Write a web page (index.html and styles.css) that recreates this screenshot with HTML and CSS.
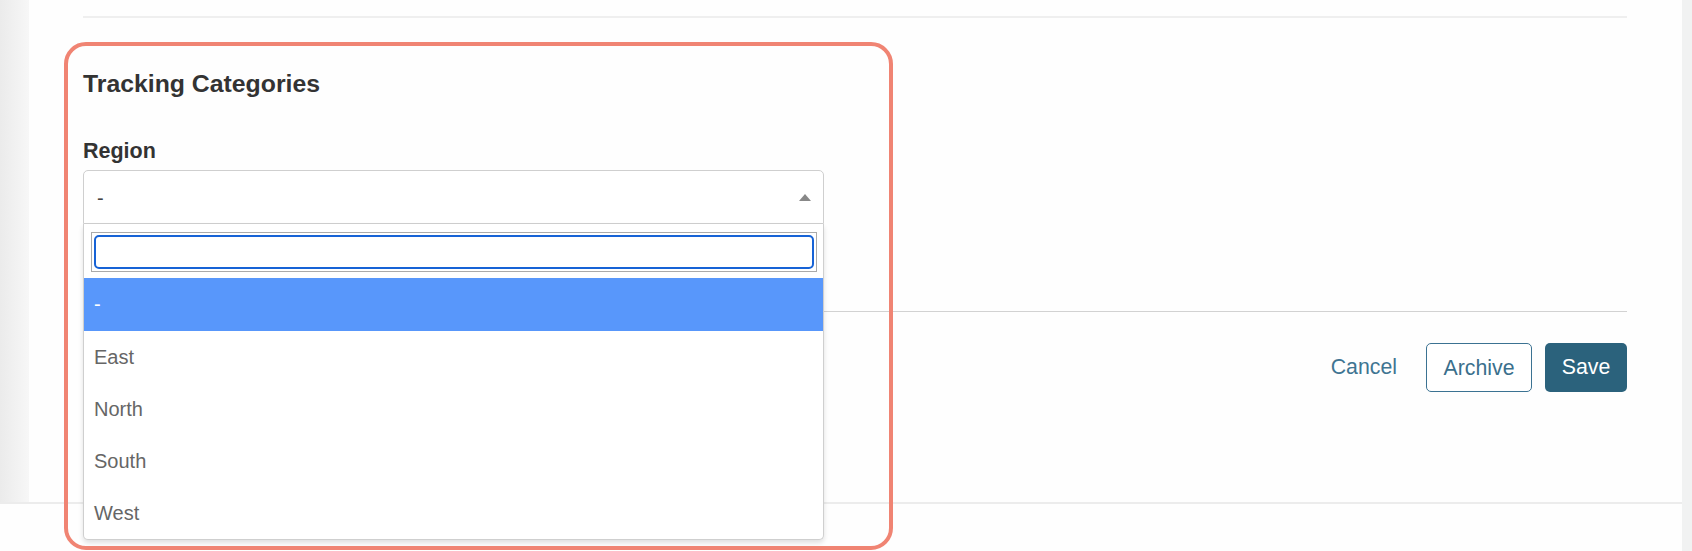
FILE: index.html
```html
<!DOCTYPE html>
<html lang="en">
<head>
<meta charset="utf-8">
<title>Tracking Categories</title>
<link rel="stylesheet" href="styles.css">
</head>
<body>
<div class="page">
  <div class="column">
    <div class="main">
      <aside class="left-shade"></aside>
      <section class="panel">
        <div class="top-rule"></div>
        <div class="section">
          <h2 class="title">Tracking Categories</h2>
          <label class="label">Region</label>
          <div class="select">
            <div class="select-box">
              <span class="select-value">-</span>
              <span class="arrow-up"></span>
            </div>
            <div class="dropdown">
              <div class="search">
                <div class="search-frame">
                  <input class="search-input" type="text" value="">
                </div>
              </div>
              <ul class="options">
                <li class="option active">-</li>
                <li class="option">East</li>
                <li class="option">North</li>
                <li class="option">South</li>
                <li class="option">West</li>
              </ul>
            </div>
          </div>
        </div>
        <div class="actions">
          <button class="btn btn-link">Cancel</button>
          <button class="btn btn-outline">Archive</button>
          <button class="btn btn-primary">Save</button>
        </div>
      </section>
    </div>
    <footer class="footer"></footer>
  </div>
  <div class="right-strip"></div>
  <div class="annotation"></div>
</div>
</body>
</html>
```
FILE: styles.css
```css
* { box-sizing: border-box; }
html, body {
  margin: 0;
  padding: 0;
  width: 1692px;
  height: 551px;
  overflow: hidden;
  font-family: "Liberation Sans", Arial, sans-serif;
  background: #fefefe;
}
.page {
  position: relative;
  display: flex;
  width: 1692px;
  height: 551px;
}
.column {
  width: 1682px;
  display: flex;
  flex-direction: column;
}
.right-strip {
  width: 10px;
  background: #f1f2f2;
}
.main {
  display: flex;
  height: 502px;
}
.left-shade {
  width: 29px;
  background: linear-gradient(to right, #ebebeb 0%, #f2f2f2 60%, #f7f7f7 100%);
}
.panel {
  flex: 1;
  background: #fefefe;
  padding: 0 55px 0 54px;
}
.top-rule {
  margin-top: 16px;
  border-top: 2px solid #efefef;
}
.section {
  padding-bottom: 87px;
  border-bottom: 1px solid #d2d2d2;
}
.title {
  margin: 52px 0 0 0;
  font-size: 24.8px;
  line-height: 28px;
  font-weight: bold;
  color: #333;
}
.label {
  display: block;
  margin-top: 41px;
  font-size: 21.5px;
  line-height: 24px;
  font-weight: bold;
  color: #333;
}
.select {
  position: relative;
  width: 741px;
  margin-top: 7px;
  z-index: 5;
}
.select-box {
  display: flex;
  align-items: center;
  height: 54px;
  padding: 0 12px 2px 13px;
  border: 1px solid #cfcfcf;
  border-radius: 5px 5px 0 0;
  background: #fff;
}
.select-value {
  font-size: 20px;
  color: #444;
  padding-top: 4px;
}
.arrow-up {
  margin-left: auto;
  margin-top: 3px;
  width: 0;
  height: 0;
  border-left: 6px solid transparent;
  border-right: 6px solid transparent;
  border-bottom: 7px solid #888;
}
.dropdown {
  position: absolute;
  top: 100%;
  left: 0;
  right: 0;
  background: #fff;
  border: 1px solid #cfcfcf;
  border-top: none;
  border-radius: 0 0 5px 5px;
  box-shadow: 0 3px 5px rgba(0, 0, 0, 0.12);
}
.search {
  padding: 8px 6px 6px 7px;
}
.search-frame {
  border: 1px solid #aaa;
  padding: 2px;
}
.search-input {
  display: block;
  width: 100%;
  height: 34px;
  margin: 0;
  border: 2px solid #1763d6;
  border-radius: 5px;
  outline: none;
  background: #fff;
  font-family: inherit;
  font-size: 20px;
}
.options {
  list-style: none;
  margin: 0;
  padding: 0;
}
.option {
  height: 52px;
  line-height: 52px;
  padding-left: 10px;
  font-size: 20px;
  color: #666;
}
.option.active {
  height: 53px;
  line-height: 53px;
  background: #5897fb;
  color: #fff;
}
.actions {
  display: flex;
  justify-content: flex-end;
  align-items: center;
  margin-top: 31px;
}
.btn {
  height: 49px;
  font-family: inherit;
  font-size: 21.3px;
  line-height: 49px;
  border-radius: 5px;
  cursor: pointer;
  padding: 0;
}
.btn-link {
  border: none;
  background: transparent;
  color: #3f7592;
  margin-right: 29px;
}
.btn-outline {
  width: 106px;
  border: 1px solid #3b7292;
  background: #fff;
  color: #3a6f8c;
}
.btn-primary {
  width: 82px;
  margin-left: 13px;
  border: none;
  background: #2b627c;
  color: #fff;
}
.footer {
  flex: 1;
  border-top: 2px solid #ececec;
  background: #fefefe;
}
.annotation {
  position: absolute;
  left: 64px;
  top: 42px;
  width: 829px;
  height: 508px;
  border: 4px solid #f08473;
  border-radius: 22px;
  z-index: 10;
  pointer-events: none;
}
```
